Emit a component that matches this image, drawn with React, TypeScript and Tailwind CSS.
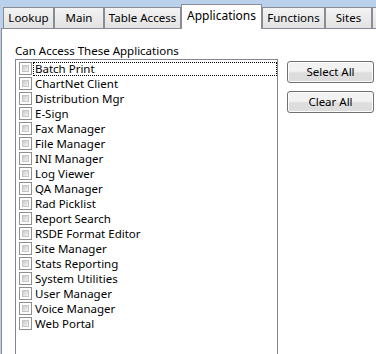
const tabs = [
  { label: "Lookup", w: "w-[51px]" },
  { label: "Main", w: "w-[50px]" },
  { label: "Table Access", w: "w-[77px]" },
  { label: "Applications", w: "w-[81px]", active: true },
  { label: "Functions", w: "w-[63px]" },
  { label: "Sites", w: "w-[47px]" },
  { label: "", w: "w-[20px]" },
];

const apps = [
  "Batch Print",
  "ChartNet Client",
  "Distribution Mgr",
  "E-Sign",
  "Fax Manager",
  "File Manager",
  "INI Manager",
  "Log Viewer",
  "QA Manager",
  "Rad Picklist",
  "Report Search",
  "RSDE Format Editor",
  "Site Manager",
  "Stats Reporting",
  "System Utilities",
  "User Manager",
  "Voice Manager",
  "Web Portal",
];

const Checkbox = () => (
  <span className="w-[13px] h-[13px] shrink-0 border border-[#8e8f8f] bg-white p-[2px] flex">
    <span className="flex-1 bg-gradient-to-br from-[#cbcbcb] to-[#f4f4f4] border border-[#c6c6c6]" />
  </span>
);

const WinButton = ({ children }: { children: string }) => (
  <button className="w-[87px] h-[22px] rounded-[3px] border border-[#707070] bg-gradient-to-b from-[#f2f2f2] from-45% to-[#dddddd] to-55% text-[11.5px] text-black shadow-[inset_0_0_0_1px_#fcfcfc]">
    {children}
  </button>
);

export default function App() {
  return (
    <div className="w-[376px] h-[354px] overflow-hidden bg-[#b9d1ea] font-['Segoe_UI','Noto_Sans',sans-serif] text-[11.5px] text-black">
      <div className="flex items-end h-[28px] pl-[3px]">
        {tabs.map((t) => (
          <div
            key={t.label + t.w}
            className={
              t.active
                ? `${t.w} h-[25px] shrink-0 -mb-px z-10 bg-white border border-b-0 border-[#898c95] flex items-start justify-center pt-[2px] text-[12px]`
                : `${t.w} h-[21px] shrink-0 bg-gradient-to-b from-[#f3f3f3] to-[#e2e2e2] border border-b-0 border-[#898c95] flex items-center justify-center`
            }
          >
            {t.label}
          </div>
        ))}
      </div>
      <div className="h-[326px] ml-[1px] bg-white border-l border-t border-[#898c95] flex pl-[13px] pt-[14px]">
        <div className="w-[263px] flex flex-col">
          <div className="h-[16px] leading-[15px]">Can Access These Applications</div>
          <div className="flex-1 border border-[#828790] border-b-0 pl-[3px] pt-px">
            {apps.map((a, i) => (
              <div key={a} className="h-[15px] flex items-center">
                <Checkbox />
                <span
                  className={`ml-px pl-px leading-[12px] h-[14px] ${
                    i === 0 ? "flex-1 border border-dotted border-black" : "border border-transparent"
                  }`}
                >
                  {a}
                </span>
              </div>
            ))}
          </div>
        </div>
        <div className="flex flex-col gap-[8px] ml-[9px] mt-[18px]">
          <WinButton>Select All</WinButton>
          <WinButton>Clear All</WinButton>
        </div>
      </div>
    </div>
  );
}
